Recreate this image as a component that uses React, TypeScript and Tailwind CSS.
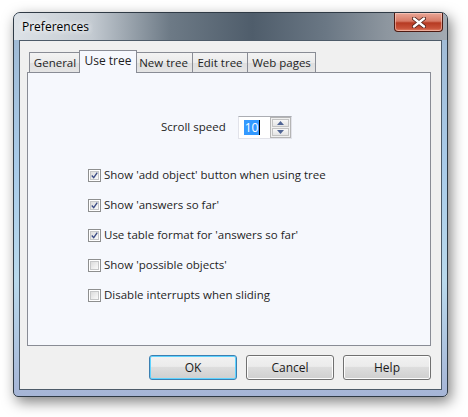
import { useState } from "react";

const tabs = ["General", "Use tree", "New tree", "Edit tree", "Web pages"];
const tabWidths = ["w-[52px]", "w-[58px]", "w-[59px]", "w-[56px]", "w-[69px]"];

const options = [
  { label: "Show 'add object' button when using tree", checked: true },
  { label: "Show 'answers so far'", checked: true },
  { label: "Use table format for 'answers so far'", checked: true },
  { label: "Show 'possible objects'", checked: false },
  { label: "Disable interrupts when sliding", checked: false },
];

function CheckBox({ checked }: { checked: boolean }) {
  return (
    <div className="w-[13px] h-[13px] border border-[#8e8f8f] bg-white p-[1px] shrink-0">
      <div className="w-full h-full border border-[#c6c7c8] bg-gradient-to-br from-[#dcdcdc] to-[#fbfbfb] flex items-center justify-center">
        {checked && (
          <svg width="9" height="9" viewBox="0 0 9 9">
            <path d="M1 4.5 L3.5 7.2 L8 0.8" fill="none" stroke="#3c4c85" strokeWidth="1.7" />
          </svg>
        )}
      </div>
    </div>
  );
}

function Spinner({ value }: { value: string }) {
  return (
    <div className="flex h-[23px] w-[54px] border border-[#e2e3ea] border-t-[#abadb3] bg-white">
      <div className="flex-1 flex items-center pl-[5px]">
        <span className="bg-[#3399ff] text-white text-[12px] leading-[15px] px-[1px] border-r border-black">{value}</span>
      </div>
      <div className="w-[21px] h-full border border-[#b5b5b5] bg-[#f0f0f0] flex flex-col gap-[1px] p-[1px]">
        <div className="flex-1 border border-[#c3c3c3] bg-gradient-to-b from-[#f7f7f7] to-[#e4e4e4] flex items-center justify-center">
          <svg width="7" height="4" viewBox="0 0 7 4">
            <path d="M3.5 0 L7 4 L0 4 Z" fill="#4f6494" />
          </svg>
        </div>
        <div className="flex-1 border border-[#c3c3c3] bg-gradient-to-b from-[#f7f7f7] to-[#e4e4e4] flex items-center justify-center">
          <svg width="7" height="4" viewBox="0 0 7 4">
            <path d="M0 0 L7 0 L3.5 4 Z" fill="#4f6494" />
          </svg>
        </div>
      </div>
    </div>
  );
}

function DialogButton({ label, isDefault }: { label: string; isDefault?: boolean }) {
  return (
    <button
      className={
        "w-[88px] h-[25px] rounded-[3px] border text-[12px] text-[#1b1b1b] bg-[linear-gradient(#f2f2f2_0%,#ebebeb_45%,#dddddd_50%,#cfcfcf_100%)] " +
        (isDefault
          ? "border-[#3c7fb1] shadow-[inset_0_0_0_1px_#5fd3ff]"
          : "border-[#707070] shadow-[inset_0_0_0_1px_#fcfcfc]")
      }
    >
      {label}
    </button>
  );
}

export default function App() {
  const [active] = useState(1);

  return (
    <div className="w-[468px] h-[417px] bg-white pt-[12px] pl-[13px] font-['Open_Sans',sans-serif] text-[11.5px] text-[#1e1e1e]">
      <div className="w-[435px] h-[385px] rounded-t-[7px] rounded-b-[5px] border border-[#2f3a45] shadow-[3px_5px_14px_rgba(0,0,0,0.5)] flex flex-col bg-[linear-gradient(to_bottom,#9fb8d2,#a9cbe9_40%,#b9d9ec_70%,#a6b5d6)]">
        <div className="relative h-[27px] shrink-0 rounded-t-[6px] bg-[linear-gradient(to_right,#dde2e7_0%,#c3cad1_18%,#6d7a86_36%,#4f5d6b_55%,#6a7784_72%,#8d969f_86%,#a3aab2_100%)] flex items-center pl-[7px]">
          <span className="text-[12px] text-black [text-shadow:0_0_6px_#fff,0_0_6px_#fff] px-[1px]">Preferences</span>
          <div className="absolute right-[4px] top-0 w-[49px] h-[19px] rounded-b-[4px] border border-t-0 border-[#4d1a12] bg-[linear-gradient(#e9a797_0%,#d77a66_45%,#b63a22_55%,#c8533a_85%,#e2866b_100%)] shadow-[inset_0_0_0_1px_rgba(255,220,210,0.5)] flex items-center justify-center">
            <svg width="14" height="11" viewBox="0 0 14 11">
              <path d="M2 1.5 L12 9.5 M12 1.5 L2 9.5" stroke="#4a1e16" strokeWidth="4" strokeLinecap="round" />
              <path d="M2 1.5 L12 9.5 M12 1.5 L2 9.5" stroke="#ffffff" strokeWidth="2.4" strokeLinecap="round" />
            </svg>
          </div>
        </div>

        <div className="mx-[5px] mb-[6px] flex-1 border border-[#4d5b69] bg-[#f0f0f0] flex flex-col">
          <div className="ml-[7px] mr-[10px] mt-[9px] flex flex-col">
            <div className="flex items-end h-[22px] pl-[2px] relative z-10">
              {tabs.map((t, i) =>
                i === active ? (
                  <div
                    key={t}
                    className={tabWidths[i] + " -mx-[2px] h-[23px] -mb-[1px] border border-b-0 border-[#898c95] bg-[#f6f8fd] flex items-center justify-center pb-[3px] text-[12px] relative z-10"}
                  >
                    {t}
                  </div>
                ) : (
                  <div
                    key={t}
                    className={tabWidths[i] + " h-[20px] border border-[#898c95] border-b-0 -ml-[1px] first:ml-0 bg-[linear-gradient(#f3f3f3,#ebebeb_50%,#dedede_51%,#e5e5e5)] flex items-center justify-center"}
                  >
                    {t}
                  </div>
                )
              )}
            </div>
            <div className="h-[274px] border border-[#898c95] bg-[#f6f8fd] flex flex-col">
              <div className="mt-[42px] flex items-center h-[24px] pl-[133px]">
                <span>Scroll speed</span>
                <div className="ml-[12px]">
                  <Spinner value="10" />
                </div>
              </div>
              <div className="mt-[21px] flex flex-col pl-[60px]">
                {options.map((o) => (
                  <div key={o.label} className="h-[30px] flex items-center gap-[3px]">
                    <CheckBox checked={o.checked} />
                    <span>{o.label}</span>
                  </div>
                ))}
              </div>
            </div>
          </div>
          <div className="mt-[9px] flex justify-end gap-[9px] pr-[10px]">
            <DialogButton label="OK" isDefault />
            <DialogButton label="Cancel" />
            <DialogButton label="Help" />
          </div>
        </div>
      </div>
    </div>
  );
}
